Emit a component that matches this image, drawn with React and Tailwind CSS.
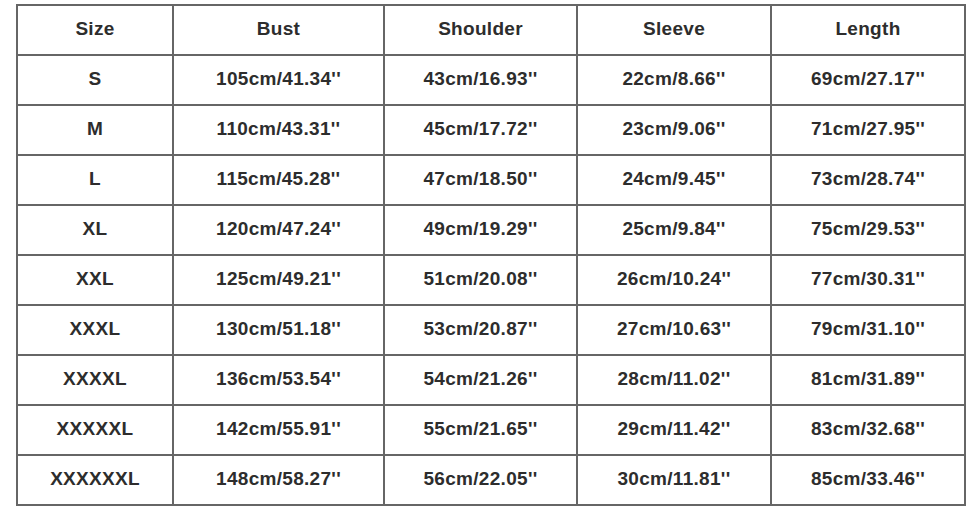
import React from "react";

const headers = ["Size", "Bust", "Shoulder", "Sleeve", "Length"];

const rows = [
  ["S", "105cm/41.34''", "43cm/16.93''", "22cm/8.66''", "69cm/27.17''"],
  ["M", "110cm/43.31''", "45cm/17.72''", "23cm/9.06''", "71cm/27.95''"],
  ["L", "115cm/45.28''", "47cm/18.50''", "24cm/9.45''", "73cm/28.74''"],
  ["XL", "120cm/47.24''", "49cm/19.29''", "25cm/9.84''", "75cm/29.53''"],
  ["XXL", "125cm/49.21''", "51cm/20.08''", "26cm/10.24''", "77cm/30.31''"],
  ["XXXL", "130cm/51.18''", "53cm/20.87''", "27cm/10.63''", "79cm/31.10''"],
  ["XXXXL", "136cm/53.54''", "54cm/21.26''", "28cm/11.02''", "81cm/31.89''"],
  ["XXXXXL", "142cm/55.91''", "55cm/21.65''", "29cm/11.42''", "83cm/32.68''"],
  ["XXXXXXL", "148cm/58.27''", "56cm/22.05''", "30cm/11.81''", "85cm/33.46''"],
];

const widths = ["w-[156px]", "w-[211px]", "w-[193px]", "w-[194px]", "w-[194px]"];

export default function App() {
  return (
    <div className="w-[980px] h-[511px] bg-white pt-[4px] pl-[16px] font-['Liberation_Sans',Arial,sans-serif]">
      <table className="table-fixed border-collapse w-[948px] text-[#2d2d2d] font-bold text-[19px] tracking-[0.3px]">
        <colgroup>
          {widths.map((w, i) => (
            <col key={i} className={w} />
          ))}
        </colgroup>
        <thead>
          <tr className="h-[50px]">
            {headers.map((h) => (
              <th key={h} className="border-2 border-[#666] text-center p-0 pb-[1px] font-bold">
                {h}
              </th>
            ))}
          </tr>
        </thead>
        <tbody>
          {rows.map((r, idx) => (
            <tr key={idx} className="h-[50px]">
              {r.map((c, j) => (
                <td key={j} className="border-2 border-[#666] text-center p-0 pb-[1px]">
                  {c}
                </td>
              ))}
            </tr>
          ))}
        </tbody>
      </table>
    </div>
  );
}
